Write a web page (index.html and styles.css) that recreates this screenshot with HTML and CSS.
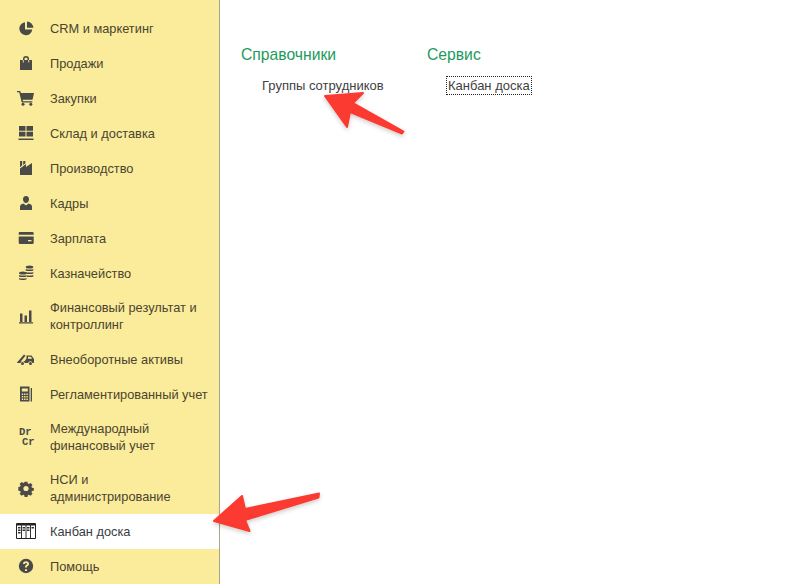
FILE: index.html
```html
<!DOCTYPE html>
<html lang="ru">
<head>
<meta charset="utf-8">
<title>Канбан доска</title>
<link rel="stylesheet" href="styles.css">
</head>
<body>
<div class="app">
  <nav class="sidebar">
    <div class="item"><span class="icon"></span><span class="label">Руководителю</span></div>
    <div class="item"><svg class="icon" viewBox="0 0 18 18"><path d="M8 3.200a6.500 6.500 0 1 0 7.300 7.300H8z"/><path d="M10 2.500v6.300h6.300A6.500 6.500 0 0 0 10 2.500z"/></svg><span class="label">CRM и маркетинг</span></div>
    <div class="item"><svg class="icon" viewBox="0 0 18 18"><path d="M3 6h3V5a3 3 0 0 1 6 0v1h3v10H3zM7.500 6h3V5a1.500 1.500 0 0 0-3 0z"/><path d="M5.800 6h.9v2.500h-.9zM11.300 6h.9v2.500h-.9z" fill="#fbec9b"/></svg><span class="label">Продажи</span></div>
    <div class="item"><svg class="icon" viewBox="0 0 18 18"><path d="M0 2h3.200l.7 2H17l-1.500 6.800H5.700l.3 1.400h9.300v1.300H4.700L2.200 3.300H0z"/><circle cx="6" cy="15.300" r="1.500"/><circle cx="13.800" cy="15.300" r="1.500"/></svg><span class="label">Закупки</span></div>
    <div class="item"><svg class="icon" viewBox="0 0 18 18"><path d="M2 2h6.500v4.700H2zM9.500 2H16v4.700H9.500zM2 7.700h6.500v4.700H2zM9.500 7.700H16v4.700H9.500zM1.500 14.500h15V16h-15z"/></svg><span class="label">Склад и доставка</span></div>
    <div class="item"><svg class="icon" viewBox="0 0 18 18"><path d="M3 2h2.200v4.200L3 8.300zM6.200 2h2.200v2.200L6.200 6zM3 9.500 9 5v3l6-4v12H3z"/></svg><span class="label">Производство</span></div>
    <div class="item"><svg class="icon" viewBox="0 0 18 18"><path d="M9 2c2.200 0 3 1.500 3 3.300 0 2-1.200 3.700-3 3.700S6 7.300 6 5.300C6 3.500 6.800 2 9 2z"/><path d="M6.500 9.500 9 11.500l2.500-2c2 .5 3.500 1.400 3.500 3.300V16H3v-3.200c0-1.900 1.500-2.800 3.500-3.300z"/></svg><span class="label">Кадры</span></div>
    <div class="item"><svg class="icon" viewBox="0 0 18 18"><path d="M2.500 3h12.800q1.400 0 1.400 1.200V5.800H1.700V4.200Q1.700 3 2.500 3zM1.700 7.500h15v6.300q0 1.200-1.400 1.200H3q-1.300 0-1.300-1.200z"/><path d="M11 11h3.500v1.300H11z" fill="#fbec9b"/></svg><span class="label">Зарплата</span></div>
    <div class="item"><svg class="icon" viewBox="0 0 18 18"><ellipse cx="12.500" cy="3" rx="3.800" ry="1.600"/><path d="M8.700 5c1 .8 6.600.8 7.600 0v1.500c-1 .8-6.600.8-7.600 0zM8.700 8c1 .8 6.600.8 7.600 0v1.500c-1 .8-6.600.8-7.600 0zM10 11.500c2 .3 5 .2 6.300-.5v1.500c-.6.5-3 .8-6.300.5z"/><ellipse cx="5.800" cy="9" rx="3.800" ry="1.600"/><path d="M2 11c1 .8 6.600.8 7.600 0v1.500c-1 .8-6.600.8-7.600 0zM2 14c1 .8 6.600.8 7.600 0v1.300c-1 .9-6.600.9-7.600 0z"/></svg><span class="label">Казначейство</span></div>
    <div class="item tall"><svg class="icon" viewBox="0 0 18 18"><path d="M3 6.500h2.500V15H3zM7.500 8.500H10V15H7.500zM12 3.500h2.500V15H12zM2 15.200h14v1.300H2z"/></svg><span class="label">Финансовый результат и контроллинг</span></div>
    <div class="item"><svg class="icon" viewBox="0 0 18 18"><path d="M0 12.500 7 4.500l1.500 1.200L4 11.300h3.500l2-2.700V5.500h5l2.500 3.500v4h-1.500a2.200 2.200 0 0 0-4.300 0H7.700a2.200 2.200 0 0 0-4.300 0H0z"/><circle cx="5.500" cy="13.500" r="1.500"/><circle cx="13.500" cy="13.500" r="1.500"/><path d="M11 6.800h2.800l1.400 2H11z" fill="#fbec9b"/></svg><span class="label">Внеоборотные активы</span></div>
    <div class="item"><svg class="icon" viewBox="0 0 18 18"><path d="M3 1.500h9.500v15H3zM13.700 3H15v13.500h-1.300z"/><path d="M4.800 3.500h6v3h-6zM4.800 8.500h1.400v1.400H4.800zM7.100 8.500h1.400v1.400H7.100zM9.400 8.500h1.400v1.400H9.400zM4.800 11h1.400v1.400H4.800zM7.100 11h1.400v1.400H7.100zM9.400 11h1.400v1.400H9.400zM4.800 13.500h1.400v1.400H4.800zM7.100 13.500h1.400v1.400H7.100zM9.400 13.500h1.400v1.400H9.400z" fill="#fbec9b"/></svg><span class="label">Регламентированный учет</span></div>
    <div class="item tall"><span class="icon drcr"><span>Dr</span><span class="cr">Cr</span></span><span class="label">Международный финансовый учет</span></div>
    <div class="item tall"><svg class="icon" viewBox="0 0 18 18"><path fill-rule="evenodd" d="M7.300 1.800h3.400l.4 2.200 1.300.6 1.900-1.300 2.400 2.400-1.300 1.900.6 1.300 2.200.4v3.300l-2.200.4-.6 1.300 1.300 1.900-2.400 2.400-1.900-1.300-1.300.6-.4 2.200H7.300l-.4-2.200-1.300-.6-1.900 1.300-2.400-2.400 1.300-1.900-.6-1.300-2.200-.4V8l2.200-.4.600-1.300-1.300-1.900 2.400-2.400 1.900 1.300 1.300-.6z" transform="translate(1.500 1.200) scale(.84)"/><circle cx="9" cy="9.500" r="2.600" fill="#fbec9b"/></svg><span class="label">НСИ и<br>администрирование</span></div>
    <div class="item active"><svg class="icon wide" viewBox="0 0 20 18"><path d="M.5 1.500h19v15H.5z" fill="none" stroke="#222"/><path d="M1 2h18v1.500H1z" fill="#222"/><path d="M5.500 2v14M10 2v14M14.500 2v14" stroke="#333" fill="none"/><path d="M2 5h2.500v1.500H2zM2 7.500h2.500V9H2zM2 10h2.500v1.500H2zM6.500 5H9v1.500H6.500zM6.500 7.500H9V9H6.500zM11 5h2.500v1.500H11zM11 7.500h2.500V9H11zM15.500 5H18v1.500h-2.500z" fill="#333"/></svg><span class="label">Канбан доска</span></div>
    <div class="item"><svg class="icon" viewBox="0 0 18 18"><path fill-rule="evenodd" d="M9 1.800a7.200 7.200 0 1 1 0 14.400A7.200 7.200 0 0 1 9 1.800zM8 12.300v1.700h2v-1.700zM9 4.200c-1.800 0-3 1-3.100 2.700h1.900c.1-.7.500-1 1.200-1 .6 0 1 .3 1 .9 0 .5-.3.800-.9 1.200-.9.600-1.100 1.100-1.100 2.400h1.900c0-.8.200-1.100.9-1.500.9-.6 1.200-1.300 1.200-2.200C12 5.100 10.800 4.200 9 4.200z"/></svg><span class="label">Помощь</span></div>
  </nav>
  <main class="content">
    <section class="group">
      <h2 class="group-title">Справочники</h2>
      <a class="link">Группы сотрудников</a>
    </section>
    <section class="group">
      <h2 class="group-title">Сервис</h2>
      <a class="link focused">Канбан доска</a>
    </section>
  </main>
  <svg class="arrows" viewBox="0 0 794 584">
    <defs><filter id="soft" x="-20%" y="-20%" width="140%" height="140%"><feDropShadow dx="0" dy="2" stdDeviation="2" flood-color="#000" flood-opacity=".2"/></filter></defs>
    <path filter="url(#soft)" stroke="#fb3a30" stroke-width="2" stroke-linejoin="round" d="M214 521 242 496 245 509 319 493.500 318.500 497.500 245 520 249.500 531z" fill="#fb3a30"/>
    <path filter="url(#soft)" stroke="#fb3a30" stroke-width="2" stroke-linejoin="round" d="M325 96 363 93 353 103 403.500 131.500 402 133.500 350 112 347 127z" fill="#fb3a30"/>
  </svg>
</div>
</body>
</html>
```
FILE: styles.css
```css
* { box-sizing: border-box; }
html, body { margin: 0; height: 100%; overflow: hidden; }
body { background: #fff; font-family: "Liberation Sans", Arial, sans-serif; }
.app { position: relative; display: flex; width: 794px; height: 584px; overflow: hidden; }
.sidebar {
  flex: none;
  width: 220px;
  height: 584px;
  background: #fbec9b;
  border-right: 1px solid #a6a391;
  overflow: hidden;
}
.item {
  display: flex;
  align-items: center;
  gap: 15px;
  height: 35px;
  padding-left: 17px;
  font-size: 12.8px;
  line-height: 17px;
  color: #4a4430;
}
.item:first-child { margin-top: -24.5px; align-items: flex-start; padding-top: 8px; }
.item.tall { height: 51px; }
.item.active { background: #fff; color: #3a3d44; }
.icon { flex: none; width: 18px; height: 18px; fill: #4a4a48; }
.icon.wide { width: 20px; margin: 0 -1px; }
.label { width: 165px; }
.drcr {
  display: flex;
  flex-direction: column;
  justify-content: center;
  font-family: "Liberation Mono", monospace;
  font-weight: 700;
  font-size: 10.5px;
  line-height: 10px;
  color: #4a4a48;
  padding-left: 2px;
}
.cr { padding-left: 3px; }
.content { display: flex; align-items: flex-start; padding: 45px 0 0 21px; }
.group { width: 186px; }
.group-title {
  margin: 0;
  font-size: 15.7px;
  font-weight: 400;
  line-height: 19px;
  color: #1d9a5b;
}
.link {
  display: inline-block;
  margin: 12px 0 0 19px;
  padding: 1px;
  border: 1px solid transparent;
  font-size: 13px;
  line-height: 15px;
  color: #3f3f3f;
}
.link.focused { border: 1px dotted #222; }
.arrows { position: absolute; left: 0; top: 0; width: 794px; height: 584px; pointer-events: none; }
```
